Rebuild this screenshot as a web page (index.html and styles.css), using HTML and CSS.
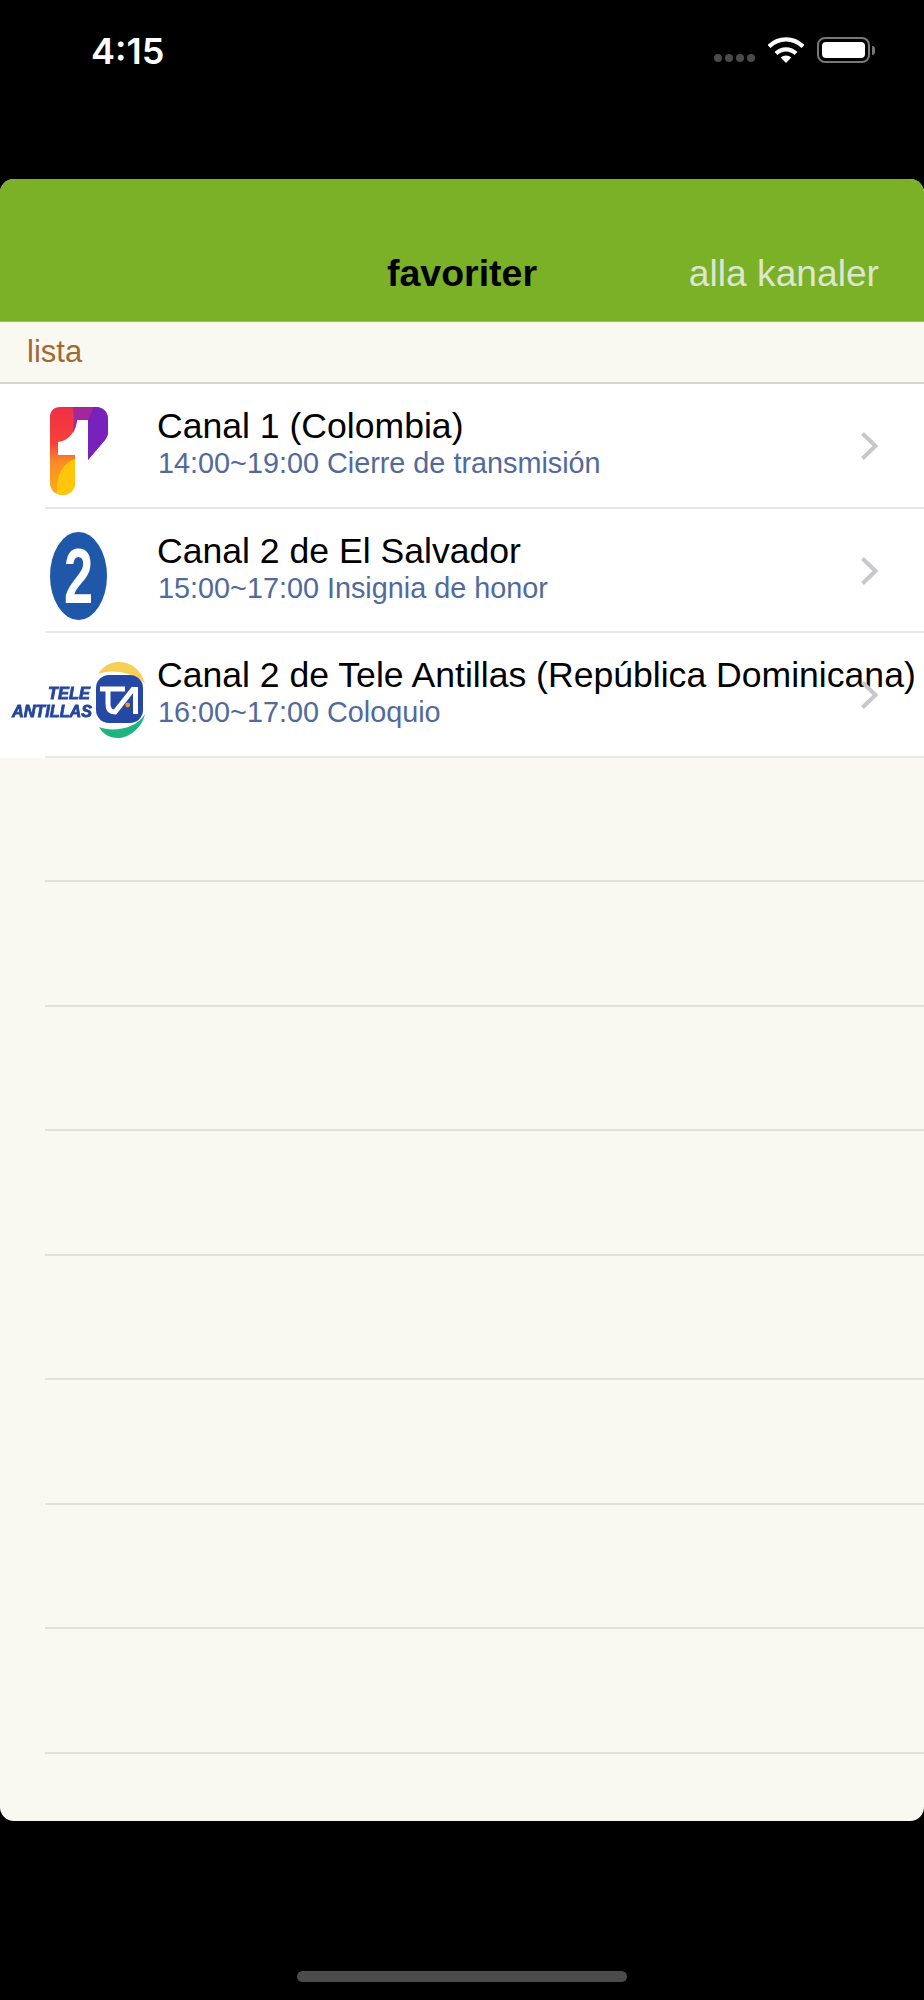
FILE: index.html
```html
<!DOCTYPE html>
<html lang="sv">
  <head>
    <meta charset="UTF-8" />
    <meta name="viewport" content="width=device-width, initial-scale=1.0" />
    <title>favoriter</title>
    <link rel="stylesheet" href="styles.css">
  </head>
  <body>
    <div class="status-bar">
      <span class="status-time">4:15</span>
      <div class="status-icons">
        <div class="signal-dots"><i></i><i></i><i></i><i></i></div>
        <svg class="wifi-icon" width="36" height="26" viewBox="0 0 36 26">
          <path d="M1 9.500C10.500 0 25.500 0 35 9.500" fill="none" stroke="#fff" stroke-width="4.200"/>
          <path d="M8 16.500C13.500 11 22.500 11 28 16.500" fill="none" stroke="#fff" stroke-width="4.200"/>
          <path d="M12.700 20.500C15.500 17.800 20.500 17.800 23.300 20.500L18 26Z" fill="#fff"/>
        </svg>
        <div class="battery"><div class="battery-fill"></div></div>
        <div class="battery-cap"></div>
      </div>
    </div>

    <div class="card">
      <div class="card-header">
        <span class="tab-current">favoriter</span>
        <span class="tab-other">alla kanaler</span>
      </div>
      <div class="section-title">lista</div>
      <ul class="channel-list">
        <li class="channel-row filled">
          <div class="channel-logo">
            <svg width="58" height="88" viewBox="0 0 58 88">
              <defs>
                <linearGradient id="oneGrad" x1="0" y1="0" x2="0" y2="1">
                  <stop offset="0" stop-color="#ee3045"/>
                  <stop offset="0.42" stop-color="#f8413a"/>
                  <stop offset="0.62" stop-color="#fb8a28"/>
                  <stop offset="1" stop-color="#fdae14"/>
                </linearGradient>
              </defs>
              <path d="M10 0H46C53 0 58 5 58 12V24C58 28 57 30 55 33L38 53V13H27C26 24 19 34 8 35V48H25V76C25 83 20 88 12.500 88C5 88 0 83 0 76V10C0 4 4 0 10 0Z" fill="url(#oneGrad)"/>
              <path d="M43 0H46C53 0 58 5 58 12V24C58 28 57 30 55 33L38 53V13Z" fill="#7722bb"/>
              <path d="M23 0H43L38 13H27C26.500 18 25 22 23 26C24 18 24 8 23 0Z" fill="#a3269a"/>
              <path d="M25 52V76C25 83 20 88 12.500 88C10 88 8 87 7 86C6 70 12 56 25 52Z" fill="#ffc60a"/>
            </svg>
          </div>
          <div class="channel-text">
            <div class="channel-name">Canal 1 (Colombia)</div>
            <div class="channel-show">14:00~19:00 Cierre de transmisión</div>
          </div>
          <svg class="chevron" width="20" height="30" viewBox="0 0 20 30"><path d="M2.500 2.500L15.500 15L2.500 27.500" fill="none" stroke="#c7c7cc" stroke-width="4"/></svg>
        </li>
        <li class="channel-row filled">
          <div class="channel-logo">
            <svg width="58" height="88" viewBox="0 0 58 88">
              <ellipse cx="28.500" cy="44" rx="28.500" ry="44" fill="#1f58a8"/>
              <text class="logo-two" transform="translate(28.500 71) scale(0.68 1)" text-anchor="middle">2</text>
            </svg>
          </div>
          <div class="channel-text">
            <div class="channel-name">Canal 2 de El Salvador</div>
            <div class="channel-show">15:00~17:00 Insignia de honor</div>
          </div>
          <svg class="chevron" width="20" height="30" viewBox="0 0 20 30"><path d="M2.500 2.500L15.500 15L2.500 27.500" fill="none" stroke="#c7c7cc" stroke-width="4"/></svg>
        </li>
        <li class="channel-row filled">
          <div class="channel-logo wide-logo">
            <svg width="134" height="80" viewBox="0 0 134 80">
              <path d="M87 14C92 6 100 2 107 2C120 2 130 9 134 24C126 13 100 8 87 14Z" fill="#f7cf57"/>
              <path d="M88 67C100 72 125 70 134 54C131 68 118 78 107 78C98 78 92 74 88 67Z" fill="#1fb37f"/>
              <rect x="85" y="15" width="47" height="48" rx="13" fill="#2548a4"/>
              <path d="M89 29H114M97 30V44Q97 52 104 52L123 28M124.500 27V54" fill="none" stroke="#fff" stroke-width="5"/>
              <circle cx="116.700" cy="45" r="2.400" fill="#f0942c"/>
              <text class="logo-tele" x="37" y="38.500" textLength="42" lengthAdjust="spacingAndGlyphs">TELE</text>
              <text class="logo-tele" x="1" y="56.500" textLength="80" lengthAdjust="spacingAndGlyphs">ANTILLAS</text>
            </svg>
          </div>
          <div class="channel-text">
            <div class="channel-name">Canal 2 de Tele Antillas (República Dominicana)</div>
            <div class="channel-show">16:00~17:00 Coloquio</div>
          </div>
          <svg class="chevron" width="20" height="30" viewBox="0 0 20 30"><path d="M2.500 2.500L15.500 15L2.500 27.500" fill="none" stroke="#c7c7cc" stroke-width="4"/></svg>
        </li>
        <li class="channel-row"></li>
        <li class="channel-row"></li>
        <li class="channel-row"></li>
        <li class="channel-row"></li>
        <li class="channel-row"></li>
        <li class="channel-row"></li>
        <li class="channel-row"></li>
        <li class="channel-row"></li>
      </ul>
    </div>

    <div class="home-bar"></div>
  </body>
</html>
```

FILE: styles.css
```css
* {
  margin: 0;
  padding: 0;
  box-sizing: border-box;
}

body {
  width: 924px;
  height: 2000px;
  background-color: #000;
  font-family: "Liberation Sans", Arial, sans-serif;
  overflow: hidden;
}

/* status bar */
.status-bar {
  height: 179px;
  display: flex;
  justify-content: space-between;
  align-items: flex-start;
  padding: 32px 49px 0 91px;
}

.status-time {
  color: #fff;
  font-family: Inter, "Liberation Sans", sans-serif;
  font-size: 36px;
  font-weight: 600;
  line-height: 38px;
}

.status-icons {
  display: flex;
  align-items: center;
  height: 26px;
  margin-top: 5px;
}

.signal-dots {
  display: flex;
  gap: 3px;
  margin: 15px 13px 0 0;
}

.signal-dots i {
  width: 8px;
  height: 8px;
  border-radius: 50%;
  background-color: #4a4a4a;
}

.wifi-icon {
  margin-right: 13px;
}

.battery {
  width: 53px;
  height: 26px;
  padding: 3px;
  border: 2px solid #777;
  border-radius: 8px;
}

.battery-fill {
  width: 100%;
  height: 100%;
  background-color: #fff;
  border-radius: 4px;
}

.battery-cap {
  width: 3px;
  height: 9px;
  margin-left: 2px;
  background-color: #777;
  border-radius: 0 3px 3px 0;
}

/* main panel */
.card {
  height: 1642px;
  background-color: #f9f8f1;
  border-radius: 14px;
  overflow: hidden;
}

.card-header {
  height: 143px;
  background-color: #7ab127;
  border-bottom: 1px solid #9ec25e;
  position: relative;
}

.tab-current {
  position: absolute;
  left: 0;
  right: 0;
  top: 72px;
  text-align: center;
  font-size: 37.500px;
  font-weight: 700;
  line-height: 44px;
  color: #000;
}

.tab-other {
  position: absolute;
  right: 45px;
  top: 72px;
  font-size: 37.200px;
  line-height: 44px;
  color: #dde6cf;
}

.section-title {
  height: 62px;
  padding: 13px 0 0 27px;
  font-size: 31px;
  line-height: 34px;
  color: #a06a33;
  border-bottom: 2px solid #d6d6d2;
}

.channel-list {
  list-style: none;
}

.channel-row {
  position: relative;
  height: 124.500px;
  display: flex;
  align-items: center;
}

.channel-row::after {
  content: "";
  position: absolute;
  left: 45px;
  right: 0;
  bottom: 0;
  height: 2px;
  background-color: rgba(0, 0, 0, 0.09);
}

.channel-row.filled {
  background-color: #fff;
}

.channel-logo {
  flex: none;
  width: 157px;
  margin-top: 10px;
  padding-left: 50px;
}

.channel-logo svg {
  display: block;
  filter: blur(0.5px);
}

.wide-logo {
  padding-left: 11px;
}

.logo-two {
  font-family: "Liberation Sans", sans-serif;
  font-size: 77px;
  font-weight: 700;
  fill: #fff;
}

.logo-tele {
  font-family: "Liberation Sans", sans-serif;
  font-size: 15.600px;
  font-style: italic;
  font-weight: 700;
  fill: #24459c;
  stroke: #24459c;
  stroke-width: 0.8px;
}

.channel-text {
  flex: none;
  margin-top: -6px;
  white-space: nowrap;
}

.channel-name {
  font-size: 35.600px;
  line-height: 38px;
  color: #000;
}

.channel-show {
  margin: 2px 0 0 1px;
  font-size: 28.800px;
  line-height: 32px;
  color: #52699b;
}

.chevron {
  position: absolute;
  left: 860px;
  top: 47px;
}

.home-bar {
  width: 330px;
  height: 11px;
  margin: 150px 0 0 297px;
  background-color: #4b4b4b;
  border-radius: 6px;
}
```
